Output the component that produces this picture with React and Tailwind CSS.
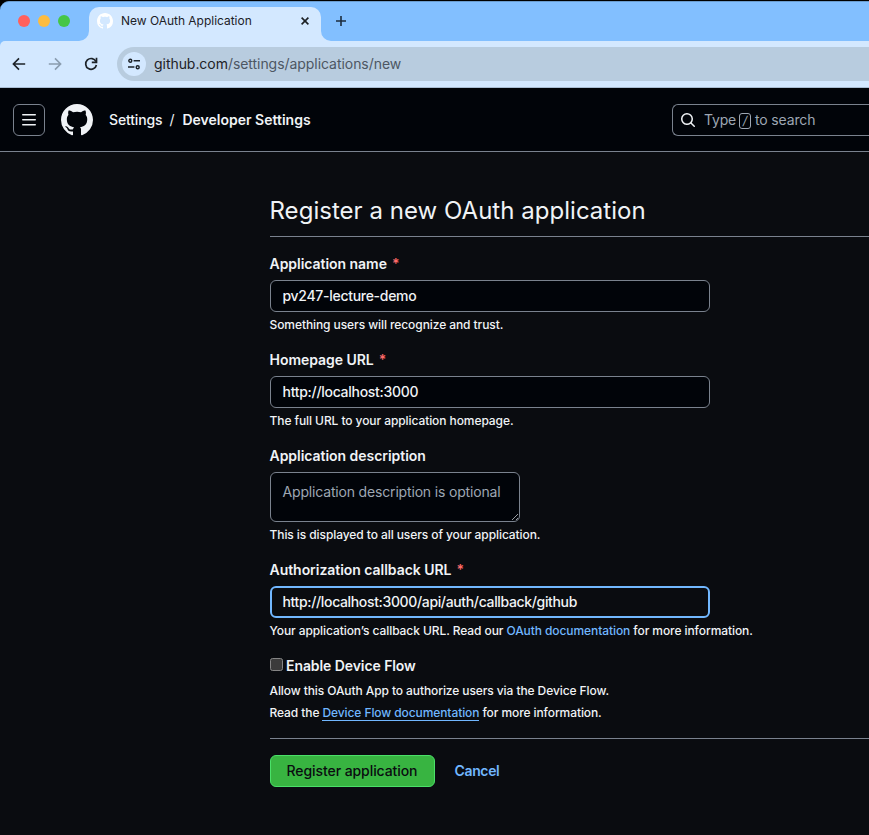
import React from "react";

const MARK =
  "M8 0c4.42 0 8 3.58 8 8a8.013 8.013 0 0 1-5.45 7.59c-.4.08-.55-.17-.55-.38 0-.27.01-1.13.01-2.2 0-.75-.25-1.23-.54-1.48 1.78-.2 3.65-.88 3.65-3.95 0-.88-.31-1.59-.82-2.15.08-.2.36-1.02-.08-2.12 0 0-.67-.22-2.2.82-.64-.18-1.32-.27-2-.27-.68 0-1.36.09-2 .27-1.53-1.03-2.2-.82-2.2-.82-.44 1.1-.16 1.92-.08 2.12-.51.56-.82 1.28-.82 2.15 0 3.06 1.86 3.75 3.64 3.95-.23.2-.44.55-.51 1.07-.46.21-1.61.55-2.33-.66-.15-.24-.6-.83-1.23-.82-.67.01-.27.38.01.53.34.19.73.9.82 1.13.16.45.68 1.31 2.69.94 0 .67.01 1.3.01 1.49 0 .21-.15.45-.55.38A7.995 7.995 0 0 1 0 8c0-4.42 3.58-8 8-8Z";

function GithubMark({ className }) {
  return (
    <svg viewBox="0 0 16 16" fill="currentColor" className={className}>
      <path d={MARK} />
    </svg>
  );
}

function TabStrip() {
  return (
    <div className="mt-px flex h-10 rounded-tl-[9px] border-t border-[#6a9ccf] bg-[#82bfff]">
      <div className="flex w-[89px] items-center gap-2 pb-px pl-[18px]">
        <span className="size-3 rounded-full bg-[#ff605c]" />
        <span className="size-3 rounded-full bg-[#fdbc40]" />
        <span className="size-3 rounded-full bg-[#46c646]" />
      </div>
      <div className="relative mt-[5px] flex w-[232px] items-center rounded-t-[10px] bg-[#d3e8ff] pr-2 pb-[6px] pl-2">
        <svg viewBox="0 0 10 10" className="absolute bottom-0 -left-[10px] size-[10px]" fill="#d3e8ff">
          <path d="M10 0v10H0A10 10 0 0 0 10 0Z" />
        </svg>
        <svg viewBox="0 0 10 10" className="absolute -right-[10px] bottom-0 size-[10px]" fill="#d3e8ff">
          <path d="M0 0v10h10A10 10 0 0 1 0 0Z" />
        </svg>
        <GithubMark className="size-4 text-white" />
        <span className="ml-2 text-[12px] leading-4 tracking-[-0.02px] whitespace-nowrap text-[#1d2127]">New OAuth Application</span>
        <svg viewBox="0 0 8 8" className="mr-1 ml-auto size-2" stroke="#1c2024" strokeWidth="1.6">
          <path d="M.6.6l6.8 6.8M7.4.6.6 7.4" />
        </svg>
      </div>
      <div className="flex w-10 items-center justify-center pb-px">
        <svg viewBox="0 0 10 10" className="size-[10px]" stroke="#1c2c3e" strokeWidth="1.6">
          <path d="M5 0v10M0 5h10" />
        </svg>
      </div>
    </div>
  );
}

function Toolbar() {
  return (
    <div className="bg-[#82bfff]">
      <div className="flex h-[46px] items-center rounded-tl-[5px] bg-[#d3e8ff]">
        <svg viewBox="0 0 14 14" className="ml-[12px] size-[14px]" fill="none" stroke="#1c2228" strokeWidth="1.6">
          <path d="M13.2 7H1.6M7 1.4 1.4 7 7 12.6" />
        </svg>
        <svg viewBox="0 0 14 14" className="ml-[22px] size-[14px]" fill="none" stroke="#8a9caf" strokeWidth="1.6">
          <path d="M.8 7h11.6M7 1.4 12.6 7 7 12.6" />
        </svg>
        <svg viewBox="0 0 14 14" className="ml-[22px] size-[14px]" fill="none" stroke="#1c2228" strokeWidth="1.7">
          <path d="M12 4.6A5.4 5.4 0 1 0 12.4 8" />
          <path d="M12.5.8v4.5H7.8" />
        </svg>
        <div className="ml-[19px] flex h-[34px] flex-1 items-center rounded-l-full bg-[#b8ccdf] pl-[5px]">
          <span className="flex size-6 items-center justify-center rounded-full bg-[#d3e8ff]">
            <svg viewBox="0 0 12 12" className="size-3" fill="none" stroke="#1c2228" strokeWidth="1.4">
              <circle cx="2.3" cy="2.8" r="1.5" />
              <path d="M5.6 2.8H12M0 9h6.4" />
              <circle cx="9.7" cy="9.2" r="1.5" />
            </svg>
          </span>
          <span className="ml-2 text-[14px] leading-5 tracking-[-0.05px] whitespace-nowrap text-[#4d5763]">
            <span className="text-[#1d2127]">github.com</span>/settings/applications/new
          </span>
        </div>
      </div>
    </div>
  );
}

function Header() {
  return (
    <header className="flex h-16 items-center border-b border-[#7a828e] bg-[#010409] text-[14px] text-[#f0f3f6]">
      <button className="ml-[13px] flex size-8 items-center justify-center rounded-md border border-[#7a828e]">
        <svg viewBox="0 0 16 16" className="size-4" fill="currentColor">
          <path d="M1 2.75A.75.75 0 0 1 1.75 2h12.5a.75.75 0 0 1 0 1.5H1.75A.75.75 0 0 1 1 2.75Zm0 5A.75.75 0 0 1 1.75 7h12.5a.75.75 0 0 1 0 1.5H1.75A.75.75 0 0 1 1 7.75ZM1.75 12h12.5a.75.75 0 0 1 0 1.5H1.75a.75.75 0 0 1 0-1.5Z" />
        </svg>
      </button>
      <GithubMark className="ml-4 size-8" />
      <nav className="ml-4 flex items-center whitespace-nowrap">
        <span className="font-[450] tracking-[-0.15px]">Settings</span>
        <span className="mr-2 ml-[7px]">/</span>
        <span className="font-semibold">Developer Settings</span>
      </nav>
      <div className="ml-auto flex h-8 w-[197px] items-center rounded-l-md border border-r-0 border-[#7a828e] pl-[7px] text-[#9ea7b3]">
        <svg viewBox="0 0 16 16" className="size-4 text-[#f0f3f6]" fill="currentColor">
          <path d="M10.68 11.74a6 6 0 0 1-7.922-8.982 6 6 0 0 1 8.982 7.922l3.04 3.04a.749.749 0 0 1-.326 1.275.749.749 0 0 1-.734-.215ZM11.5 7a4.499 4.499 0 1 0-8.997 0A4.499 4.499 0 0 0 11.5 7Z" />
        </svg>
        <span className="ml-2 tracking-[-0.2px]">Type</span>
        <span className="mt-[2px] mr-1 ml-[3px] flex h-4 w-3 items-center justify-center rounded-[3px] border border-[#9ea7b3] text-[12px]">
          <span className="skew-x-[-10deg]">/</span>
        </span>
        <span className="tracking-[-0.15px]">to search</span>
      </div>
    </header>
  );
}

function Label({ children, required }) {
  return (
    <label className="flex h-[21px] items-center pb-[2px] text-[14px] font-semibold tracking-[-0.04px] whitespace-nowrap">
      {children}
      {required && <span className="ml-[5px] text-[#ff6a69]">*</span>}
    </label>
  );
}

function Caption({ children }) {
  return <p className="mt-1 h-[18px] text-[12px] leading-[18px] font-[450] tracking-[-0.08px] whitespace-nowrap">{children}</p>;
}

function Field({ label, value, focused, caption }) {
  return (
    <div>
      <Label required>{label}</Label>
      <div
        className={
          focused
            ? "mt-[5px] flex h-8 w-[440px] items-center rounded-md border-2 border-[#71b7ff] bg-[#0a0c10] px-[11px] pb-[2px] text-[14px] font-[450] tracking-[-0.35px]"
            : "mt-[5px] flex h-8 w-[440px] items-center rounded-md border border-[#7a828e] bg-[#010409] px-3 pb-[2px] text-[14px] font-[450] tracking-[-0.29px]"
        }
      >
        {value}
      </div>
      <Caption>{caption}</Caption>
    </div>
  );
}

export default function App() {
  return (
    <div className="flow-root h-[835px] w-[869px] overflow-hidden bg-black font-['Inter','Liberation_Sans',sans-serif]">
      <TabStrip />
      <Toolbar />
      <div className="h-px bg-[#a9bdd3]" />
      <Header />
      <main className="h-[683px] bg-[#0a0c10] pt-[41px] pl-[269.5px] text-[#f0f3f6]">
        <h1 className="h-[44px] border-b border-[#7a828e] text-[24px] leading-9 tracking-[0.03px] whitespace-nowrap">Register a new OAuth application</h1>
        <form className="mt-[17px] flex flex-col gap-4">
          <Field label="Application name" value="pv247-lecture-demo" caption="Something users will recognize and trust." />
          <Field label="Homepage URL" value="http://localhost:3000" caption="The full URL to your application homepage." />
          <div>
            <Label>Application description</Label>
            <div className="relative mt-[5px] h-[50px] w-[250px] rounded-md border border-[#7a828e] bg-[#010409] px-3 pt-2 text-[14px] leading-[21px] tracking-[-0.17px] whitespace-nowrap text-[#9ea7b3]">
              Application description is optional
              <svg viewBox="0 0 8 8" className="absolute right-0 bottom-0 size-2" stroke="#a8adb3" strokeWidth="0.9">
                <path d="M1 7 7 1M5 7l2-2" />
              </svg>
            </div>
            <Caption>This is displayed to all users of your application.</Caption>
          </div>
          <Field
            label="Authorization callback URL"
            value="http://localhost:3000/api/auth/callback/github"
            focused
            caption={
              <>
                Your application’s callback URL. Read our <a className="text-[#71b7ff]">OAuth documentation</a> for more information.
              </>
            }
          />
          <div className="border-b border-[#7a828e] pb-4">
            <div className="flex h-[21px] items-center pb-[2px] text-[14px] font-semibold tracking-[-0.08px]">
              <span className="mr-[3.5px] mb-[2px] size-[13px] rounded-[2.5px] border border-[#858585] bg-[#3b3b3b]" />
              Enable Device Flow
            </div>
            <p className="mt-[5px] text-[12px] leading-[18px] font-[450] tracking-[-0.09px]">Allow this OAuth App to authorize users via the Device Flow.</p>
            <p className="mt-1 text-[12px] leading-[18px] font-[450] tracking-[-0.09px]">
              Read the <a className="border-b border-[#71b7ff] text-[#71b7ff]">Device Flow documentation</a> for more information.
            </p>
          </div>
          <div className="flex items-center text-[14px] font-medium tracking-[-0.08px]">
            <span className="flex h-8 w-[165px] items-center justify-center rounded-md border border-[#4ae168] bg-[#38b441] pb-[2px] text-[#0a0c10]">
              Register application
            </span>
            <span className="ml-5 pb-[2px] font-semibold tracking-[-0.35px] text-[#71b7ff]">Cancel</span>
          </div>
        </form>
      </main>
    </div>
  );
}
